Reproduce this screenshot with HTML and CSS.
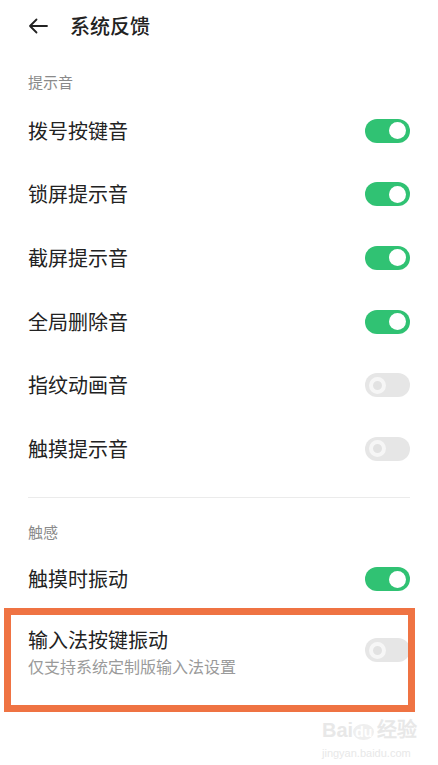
FILE: index.html
```html
<!DOCTYPE html>
<html lang="zh-CN">
<head>
<meta charset="UTF-8">
<meta name="viewport" content="width=device-width, initial-scale=1.0">
<title>系统反馈</title>
<link rel="stylesheet" href="styles.css">
</head>
<body>
<div class="page">
  <div class="header">
    <svg class="back" width="20" height="16" viewBox="0 0 20 16">
      <path d="M19 8H2M8.5 1.5L2 8l6.5 6.5" fill="none" stroke="#222" stroke-width="1.8" stroke-linecap="round" stroke-linejoin="round"/>
    </svg>
    <h1 class="title">系统反馈</h1>
  </div>

  <div class="section-label first">提示音</div>
  <div class="row"><span class="name">拨号按键音</span><span class="switch on"></span></div>
  <div class="row"><span class="name">锁屏提示音</span><span class="switch on"></span></div>
  <div class="row"><span class="name">截屏提示音</span><span class="switch on"></span></div>
  <div class="row"><span class="name">全局删除音</span><span class="switch on"></span></div>
  <div class="row"><span class="name">指纹动画音</span><span class="switch"></span></div>
  <div class="row"><span class="name">触摸提示音</span><span class="switch"></span></div>

  <div class="divider"></div>

  <div class="section-label second">触感</div>
  <div class="row"><span class="name">触摸时振动</span><span class="switch on"></span></div>
  <div class="row tall">
    <div class="texts">
      <span class="name">输入法按键振动</span>
      <span class="sub">仅支持系统定制版输入法设置</span>
    </div>
    <span class="switch"></span>
  </div>

  <!-- annotation box drawn over the screenshot -->
  <div class="mark"></div>
  <div class="watermark">
    <div class="wm-logo">Bai<span class="wm-du">du</span>经验</div>
    <div class="wm-url">jingyan.baidu.com</div>
  </div>
</div>
</body>
</html>
```

FILE: styles.css
```css
body {
  margin: 0;
  background: #fff;
  font-family: "Noto Sans CJK SC", "Noto Sans", sans-serif;
  color: #222;
}
.page {
  position: relative;
  width: 438px;
  height: 765px;
  overflow: hidden;
}
.header {
  display: flex;
  align-items: center;
  height: 52px;
  padding-left: 28px;
}
.back {
  display: block;
  margin-right: 22px;
}
.title {
  margin: 0;
  font-size: 20px;
  font-weight: 500;
  line-height: 24px;
}
.section-label {
  font-size: 15px;
  line-height: 20px;
  color: #8a8a8a;
  padding-left: 28px;
}
.section-label.first {
  margin-top: 20px;
  margin-bottom: 7px;
}
.section-label.second {
  margin-top: 24px;
  margin-bottom: 6px;
}
.row {
  display: flex;
  align-items: center;
  justify-content: space-between;
  height: 63.6px;
  padding: 0 28px;
}
.row.tall {
  height: auto;
  padding-top: 17px;
  align-items: flex-start;
}
.row.tall .switch {
  margin-top: 10px;
}
.texts {
  display: flex;
  flex-direction: column;
}
.name {
  font-size: 20px;
  line-height: 24px;
}
.sub {
  font-size: 16px;
  line-height: 20px;
  color: #9a9a9a;
  margin-top: 4px;
}
.switch {
  position: relative;
  width: 45px;
  height: 24px;
  border-radius: 12px;
  background: #e6e6e6;
  flex: none;
}
.switch::after {
  content: "";
  position: absolute;
  top: 3.5px;
  left: 4px;
  width: 9px;
  height: 9px;
  border-radius: 50%;
  border: 4px solid #f6f6f6;
  background: #e2e2e2;
}
.switch.on {
  background: #30c273;
}
.switch.on::after {
  left: auto;
  right: 4px;
  top: 3.5px;
  width: 17px;
  height: 17px;
  border: none;
  background: #fff;
}
.divider {
  height: 1px;
  background: #ebebeb;
  margin: 16px 28px 0;
}
.mark {
  position: absolute;
  left: 4px;
  top: 608px;
  width: 397px;
  height: 90px;
  border: 7px solid #ef7343;
}
.watermark {
  position: absolute;
  left: 322px;
  top: 718px;
  color: #e8e8e8;
  font-family: "Liberation Sans", sans-serif;
}
.wm-logo {
  font-size: 20px;
  font-weight: bold;
  line-height: 24px;
}
.wm-du {
  font-size: 14px;
  background: #efefef;
  color: #fff;
  border-radius: 50%;
  padding: 0 2px;
  margin-right: 3px;
}
.wm-url {
  font-size: 11px;
  line-height: 14px;
  margin-top: 2px;
}
```
